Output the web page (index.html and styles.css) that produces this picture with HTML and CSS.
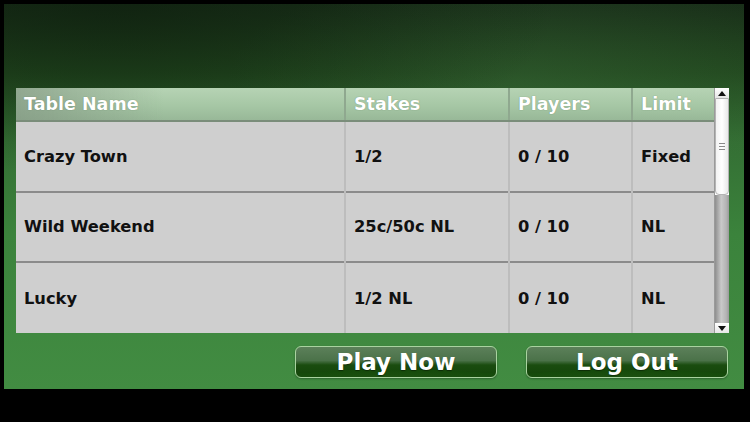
FILE: index.html
```html
<!DOCTYPE html>
<html lang="en">

<head>
    <meta charset="UTF-8">
    <meta name="viewport" content="width=device-width, initial-scale=1.0">
    <title>poker lobby</title>
    <link rel="stylesheet" href="styles.css">
</head>

<body>
    <div id="felt">
        <div id="lobby">
            <table id="tables">
                <thead>
                    <tr>
                        <th class="c-name">Table Name</th>
                        <th class="c-stakes">Stakes</th>
                        <th class="c-players">Players</th>
                        <th class="c-limit">Limit</th>
                    </tr>
                </thead>
                <tbody>
                    <tr>
                        <td>Crazy Town</td>
                        <td>1/2</td>
                        <td>0 / 10</td>
                        <td>Fixed</td>
                    </tr>
                    <tr>
                        <td>Wild Weekend</td>
                        <td>25c/50c NL</td>
                        <td>0 / 10</td>
                        <td>NL</td>
                    </tr>
                    <tr>
                        <td>Lucky</td>
                        <td>1/2 NL</td>
                        <td>0 / 10</td>
                        <td>NL</td>
                    </tr>
                </tbody>
            </table>
            <div class="scrollbar">
                <div class="arrow up">
                    <svg width="8" height="5" viewBox="0 0 8 5"><path d="M0 5 L4 0 L8 5 Z" fill="#111"/></svg>
                </div>
                <div class="thumb">
                    <span class="grip"></span>
                </div>
                <div class="track"></div>
                <div class="arrow down">
                    <svg width="8" height="5" viewBox="0 0 8 5"><path d="M0 0 L8 0 L4 5 Z" fill="#111"/></svg>
                </div>
            </div>
        </div>
        <div id="actions">
            <button class="btn">Play Now</button>
            <button class="btn">Log Out</button>
        </div>
    </div>
</body>

</html>
```

FILE: styles.css
```css
body {
    margin: 0;
    background-color: #000;
    font-family: "DejaVu Sans", "Liberation Sans", sans-serif;
    width: 750px;
    height: 422px;
    overflow: hidden;
}

#felt {
    margin: 4px 6px 0 4px;
    height: 385px;
    box-sizing: border-box;
    padding: 84px 0 0 12px;
    background:
        radial-gradient(ellipse 60% 45% at 15% 0%, rgba(10, 25, 10, 0.55), rgba(10, 25, 10, 0) 100%),
        radial-gradient(ellipse 40% 30% at 70% 20%, rgba(70, 120, 70, 0.25), rgba(70, 120, 70, 0) 100%),
        linear-gradient(to bottom, #192f19 0%, #22491f 18%, #346f34 36%, #3b833c 60%, #428c42 100%);
}

#lobby {
    display: flex;
    width: 713px;
    height: 245px;
}

table {
    flex-shrink: 0;
    width: 698px;
    border-collapse: collapse;
    table-layout: fixed;
    font-weight: bold;
}

th,
td {
    box-sizing: border-box;
}

.c-name {
    width: 329px;
}

.c-stakes {
    width: 164px;
}

.c-players {
    width: 123px;
}

.c-limit {
    width: 82px;
}

th {
    height: 33px;
    padding: 0 8px;
    text-align: left;
    font-size: 17.5px;
    color: #fff;
    white-space: nowrap;
    text-shadow: 0 0 1px rgba(60, 90, 60, 0.6);
    border-bottom: 2px solid #7a8d7a;
    border-left: 2px solid #8fa88f;
    background: linear-gradient(to bottom, #b6d3b4 0%, #a6c7a5 55%, #98b898 100%);
}

th:first-child {
    border-left: none;
    background:
        linear-gradient(to right, rgba(130, 150, 130, 0.7), rgba(130, 150, 130, 0) 45%),
        linear-gradient(to bottom, #b6d3b4 0%, #a6c7a5 55%, #98b898 100%);
}

td {
    height: 68px;
    padding: 0 8px;
    font-size: 16.3px;
    color: #111;
    white-space: nowrap;
    background-color: #cfcfcf;
    border-left: 2px solid #bdbdbd;
}

td:first-child {
    border-left: none;
}

tbody tr + tr td {
    border-top: 2px solid #8b8b8b;
}

.scrollbar {
    width: 15px;
    flex-shrink: 0;
    display: flex;
    flex-direction: column;
    background-color: #fff;
    border-left: 1px solid #9a9a9a;
    box-sizing: border-box;
}

.arrow {
    height: 10px;
    display: flex;
    align-items: center;
    justify-content: center;
    background: linear-gradient(to bottom, #fff, #e6e6e6);
}

.thumb {
    height: 95px;
    display: flex;
    align-items: center;
    justify-content: center;
    background: linear-gradient(to right, #f2f2f2, #fff 50%, #e8e8e8);
    border: 1px solid #b4b4b4;
    border-radius: 0 0 4px 4px;
}

.grip {
    width: 6px;
    height: 7px;
    background: repeating-linear-gradient(to bottom, #8a8a8a 0 1px, transparent 1px 3px);
}

.track {
    flex: 1;
    background: linear-gradient(to right, #8e8e8e, #c9c9c9 45%, #b4b4b4 80%, #9a9a9a);
}

#actions {
    display: flex;
    gap: 29px;
    margin-top: 13px;
    padding-left: 279px;
}

.btn {
    width: 202px;
    height: 32px;
    padding: 0;
    border: 1px solid #a9d3a0;
    border-radius: 6px;
    font-family: "DejaVu Sans", "Liberation Sans", sans-serif;
    font-weight: bold;
    font-size: 23px;
    line-height: 30px;
    color: #fff;
    text-shadow: 0 1px 1px rgba(0, 0, 0, 0.4);
    background:
        radial-gradient(ellipse 120% 70% at 50% 115%, #1f5412 0%, #154a0b 55%, rgba(21, 74, 11, 0) 56%),
        linear-gradient(to bottom, #5c805a 0%, #4b7249 45%, #1a4c0f 60%, #134409 100%);
    box-shadow: 0 1px 2px rgba(0, 0, 0, 0.3);
}
```
